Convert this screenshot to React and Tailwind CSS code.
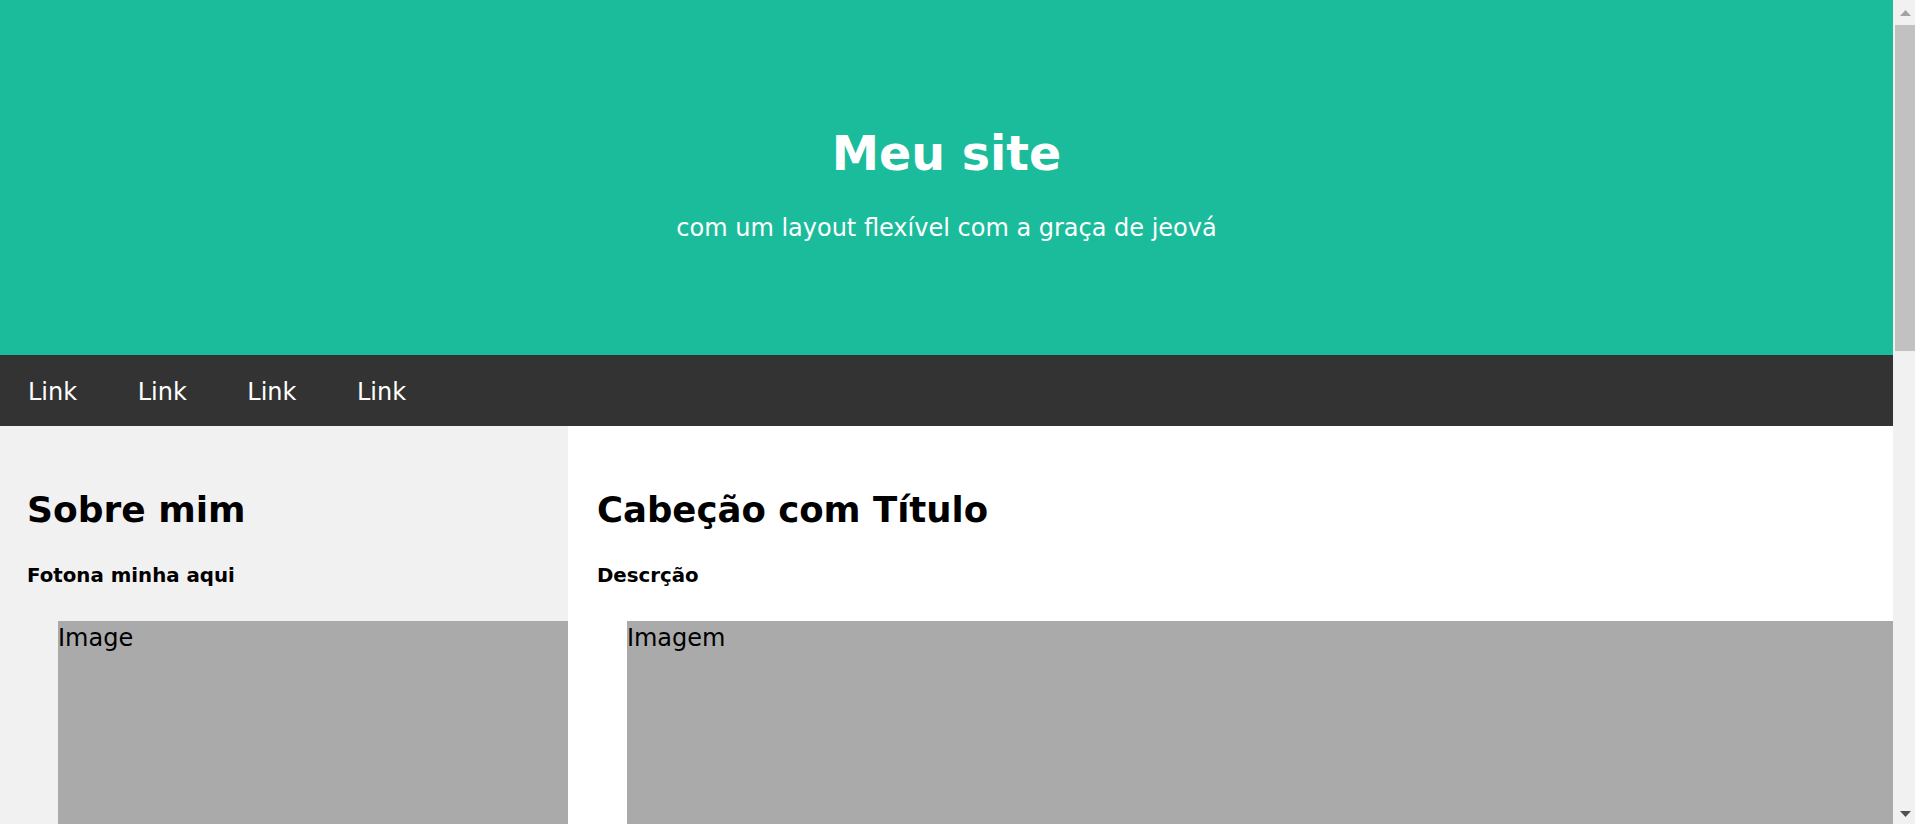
export default function App() {
  const links = ["Link", "Link", "Link", "Link"];
  return (
    <div className="flex h-[824px] w-full overflow-hidden font-['DejaVu_Sans',sans-serif]">
      <div className="flex min-w-0 flex-1 flex-col">
        <header className="flex h-[355px] shrink-0 flex-col items-center bg-[#1bbc9b] pt-[130px] text-white">
          <h1 className="text-[47.5px] font-bold leading-[48px]">Meu site</h1>
          <p className="mt-[38px] text-[24px] leading-[24px]">com um layout flexível com a graça de jeová</p>
        </header>
        <nav className="flex h-[71px] shrink-0 gap-[60.5px] bg-[#333333] pl-[28px] pt-[25px]">
          {links.map((l, i) => (
            <a key={i} className="text-[24px] leading-[24px] text-white">
              {l}
            </a>
          ))}
        </nav>
        <div className="flex flex-1 text-black">
          <aside className="basis-[30%] bg-[#f1f1f1] pl-[27px] pt-[66px]">
            <h2 className="text-[36px] font-bold leading-[36px]">Sobre mim</h2>
            <h3 className="mt-[38px] text-[19.8px] font-bold leading-[20px]">Fotona minha aqui</h3>
            <div className="ml-[31px] mt-[35px] h-[300px] bg-[#aaaaaa] pt-[5px] text-[24px] leading-[24px]">Image</div>
          </aside>
          <main className="basis-[70%] bg-white pl-[29px] pt-[66px]">
            <h2 className="text-[35.5px] font-bold leading-[36px]">Cabeção com Título</h2>
            <h3 className="mt-[38px] text-[19.8px] font-bold leading-[20px]">Descrção</h3>
            <div className="ml-[30px] mt-[35px] h-[300px] bg-[#aaaaaa] pt-[5px] text-[24px] leading-[24px]">Imagem</div>
          </main>
        </div>
      </div>
      <div className="flex w-[22px] shrink-0 flex-col bg-[#f1f1f1]">
        <svg width="22" height="25" viewBox="0 0 22 25" className="shrink-0">
          <polygon points="7,16 18,16 12.5,10" fill="#a3a3a3" />
        </svg>
        <div className="ml-[2px] h-[326px] shrink-0 bg-[#c1c1c1]" />
        <div className="flex-1" />
        <svg width="22" height="22" viewBox="0 0 22 22" className="shrink-0">
          <polygon points="7,9 18,9 12.5,15" fill="#505050" />
        </svg>
      </div>
    </div>
  );
}
